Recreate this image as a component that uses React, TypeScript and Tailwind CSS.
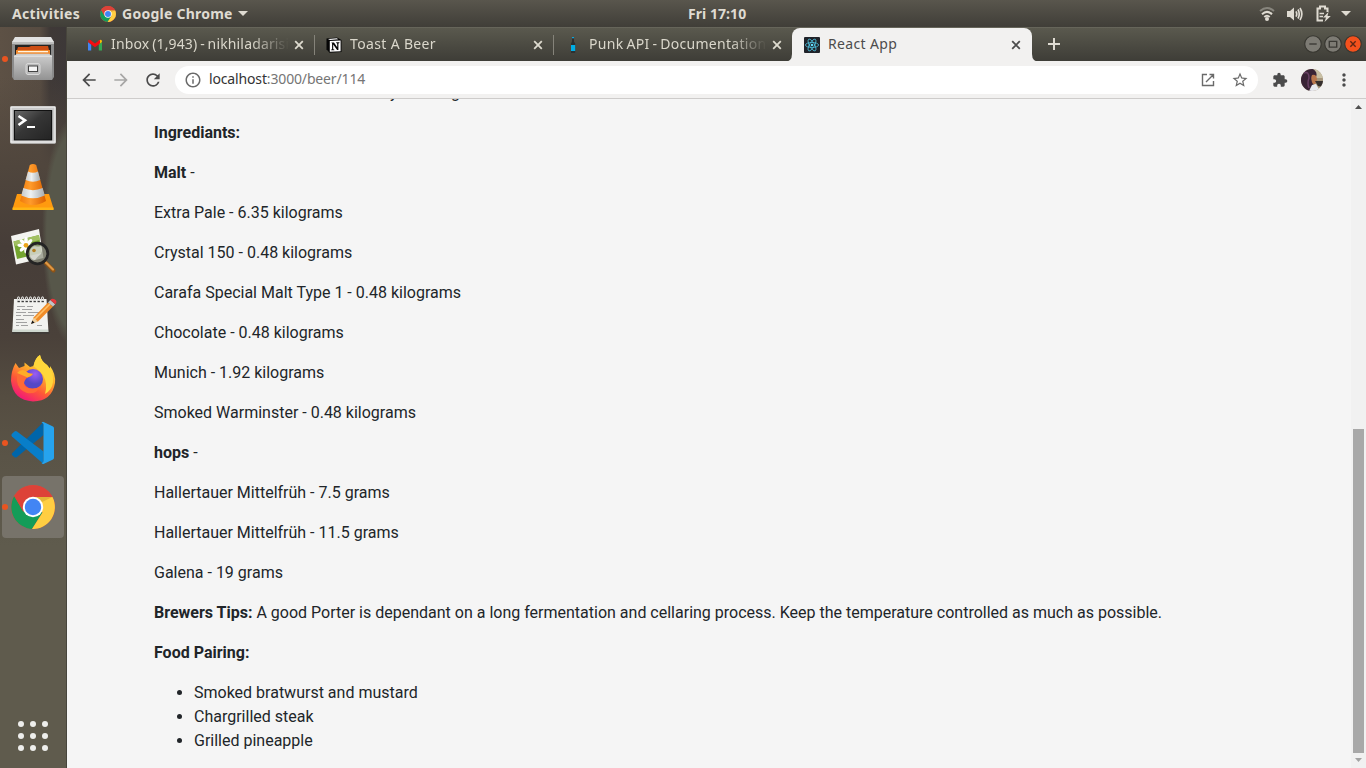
import React from "react";
import { MdArrowBack, MdArrowForward, MdRefresh, MdExtension, MdStarBorder, MdMoreVert, MdOutlineInfo } from "react-icons/md";

const ui = "font-['Noto_Sans',sans-serif] whitespace-nowrap";

function ChromeLogo({ className }: { className?: string }) {
  return (
    <svg className={className} viewBox="0 0 44 44">
      <circle cx="22" cy="22" r="22" fill="#dd4b3e" />
      <path d="M3.2 11 A22 22 0 0 0 21 44 L31.5 27.5 L22 22 L12 26 Z" fill="#149c58" />
      <path d="M41.5 12 A22 22 0 0 1 21 44 L31.5 27.5 L22 12 Z" fill="#ffce42" />
      <path d="M3.2 11 A22 22 0 0 1 41.5 12 H22 L12.5 27 Z" fill="#dd4238" />
      <path d="M22 12 H41.5 L31 17 Z" fill="#c99c2b" opacity=".5" />
      <circle cx="22" cy="22" r="10.2" fill="#fff" />
      <circle cx="22" cy="22" r="8.2" fill="#4285f4" />
    </svg>
  );
}

function Close({ color }: { color: string }) {
  return (
    <svg className="h-[10px] w-[10px] shrink-0" viewBox="0 0 10 10">
      <path d="M1.2 1.2 L8.8 8.8 M8.8 1.2 L1.2 8.8" stroke={color} strokeWidth="1.8" />
    </svg>
  );
}

function Gmail() {
  return (
    <svg className="h-4 w-4 shrink-0" viewBox="0 0 16 16">
      <path d="M1 5 V13.5 H4.2 V7.4 Z" fill="#4285f4" />
      <path d="M15 5 V13.5 H11.8 V7.4 Z" fill="#34a853" />
      <path d="M11.8 3.6 Q15 1.5 15 5 L11.8 7.6 Z" fill="#fbbc04" />
      <path d="M4.2 3.6 Q1 1.5 1 5 L4.2 7.6 Z" fill="#c5221f" />
      <path d="M3 2.8 L8 6.6 L13 2.8 L13 6.4 L8 10.3 L3 6.4 Z" fill="#f60c12" />
    </svg>
  );
}

function Notion() {
  return (
    <svg className="h-4 w-4 shrink-0" viewBox="0 0 16 16">
      <path d="M.5 1.5 L11 .5 L15.5 3 V15 L3.5 15.7 L.5 12.2 Z" fill="#050505" />
      <path d="M2 2 L10.8 1.3 L12.3 2.2 L4 2.9 Z" fill="#fff" />
      <path d="M3.8 4 L14.6 3.4 V14.2 L3.8 14.8 Z" fill="#fff" />
      <path d="M5.3 5.5 H8 L11.2 10.2 V6.4 L10.2 6 V5.3 H13.4 V6 L12.4 6.4 V13 H11.1 L7.2 7.5 V12.2 L8.3 12.5 V13.2 H5.2 V12.5 L6.1 12.2 V6.4 Z" fill="#050505" />
    </svg>
  );
}

function Bottle() {
  return (
    <svg className="h-4 w-4 shrink-0" viewBox="0 0 16 16">
      <path d="M7 0 H9 V4.8 L10.2 6.5 V16 H6 V6.5 L7 4.8 Z" fill="#2c3032" />
      <path d="M7 0 H9 V1.2 H7 Z" fill="#0ba6df" />
      <path d="M6 8 H10.2 V14 H6 Z" fill="#00aee6" />
    </svg>
  );
}

function ReactMark() {
  return (
    <svg className="h-4 w-4" viewBox="0 0 16 16">
      <rect width="16" height="16" rx="1" fill="#20232a" />
      <g fill="none" stroke="#4fc0dd" strokeWidth=".8">
        <ellipse cx="8" cy="8" rx="6.6" ry="2.5" />
        <ellipse cx="8" cy="8" rx="6.6" ry="2.5" transform="rotate(60 8 8)" />
        <ellipse cx="8" cy="8" rx="6.6" ry="2.5" transform="rotate(120 8 8)" />
      </g>
      <circle cx="8" cy="8" r="1.3" fill="#61dafb" />
    </svg>
  );
}

const tabs = [
  { icon: <Gmail />, title: "Inbox (1,943) - nikhiladarisi", cls: "tracking-[0.15px] [word-spacing:-1px]" },
  { icon: <Notion />, title: "Toast A Beer", cls: "tracking-[0.35px]" },
  { icon: <Bottle />, title: "Punk API - Documentation", cls: "tracking-[0.3px] [word-spacing:-1px]" },
];

function DockArt({ children }: { children: React.ReactNode }) {
  return <svg className="h-16 w-[67px]" viewBox="0 0 67 64">{children}</svg>;
}

const Files = (
  <DockArt>
    <defs>
      <linearGradient id="metal" x1="0" y1="0" x2="0" y2="1"><stop stopColor="#d0d0d0" /><stop offset="1" stopColor="#929292" /></linearGradient>
    </defs>
    <path d="M12 14 H54 V50 L52 53 H14 L12 50 Z" fill="#8b8b8b" />
    <path d="M15 10 H51 L54 15 H12 Z" fill="#e2e2e2" />
    <path d="M12 15 H54 V17 H12 Z" fill="#bdbdbd" />
    <path d="M15 18 H51 V29 H15 Z" fill="#232323" />
    <path d="M18 20 H29 L31 19 H48 L49 23 H17 Z" fill="#cc4d14" />
    <path d="M16 23 H50 V28 H16 Z" fill="#f08a30" />
    <path d="M18 24 H48 V25.3 H18 Z" fill="#fff3e0" />
    <path d="M14 29 L17 26.7 H49 L52 29 V53 H14 Z" fill="url(#metal)" />
    <path d="M14 28.6 H52 V30 H14 Z" fill="#dedede" />
    <rect x="26" y="36.5" width="14" height="11" rx="2" fill="#b9b9b9" stroke="#dadada" />
    <rect x="28.5" y="39" width="9" height="5.5" fill="#f5f5f5" stroke="#444" />
  </DockArt>
);

const Terminal = (
  <DockArt>
    <defs>
      <linearGradient id="screen" x1="0" y1="0" x2="1" y2="1"><stop stopColor="#686868" /><stop offset=".45" stopColor="#363636" /><stop offset="1" stopColor="#242424" /></linearGradient>
    </defs>
    <rect x="10.2" y="15.2" width="45.6" height="37.6" rx="1.5" fill="#c9c9c9" />
    <rect x="11" y="16" width="44" height="35" fill="none" stroke="#f5f5f5" />
    <rect x="13.8" y="19" width="38.4" height="30.4" fill="#111" />
    <rect x="15" y="20" width="36" height="28.5" fill="url(#screen)" />
    <path d="M18.5 25 L25 29.3 L18.5 34" fill="none" stroke="#fff" strokeWidth="2.6" />
    <path d="M27 36 H35" stroke="#fff" strokeWidth="2" />
  </DockArt>
);

const Vlc = (
  <DockArt>
    <defs>
      <linearGradient id="cone" x1="0" y1="0" x2="1" y2="0"><stop stopColor="#ef7b0c" /><stop offset=".4" stopColor="#ff9b2b" /><stop offset="1" stopColor="#d95f00" /></linearGradient>
      <linearGradient id="band" x1="0" y1="0" x2="1" y2="0"><stop stopColor="#c6cacc" /><stop offset=".4" stopColor="#eef1f2" /><stop offset="1" stopColor="#a6acaf" /></linearGradient>
    </defs>
    <path d="M17 39 H49 L53.5 53.5 Q54 55 52 55 H14 Q12 55 12.6 53.5 Z" fill="#ff9a0f" />
    <path d="M12.6 52.5 H53.5 V55 H12.6 Z" fill="#ffb616" />
    <path d="M29.8 10 Q33 7.8 36.2 10 L46 46 Q33 54 20 46 Z" fill="url(#cone)" />
    <path d="M28 16.5 Q33 19 38 16.5 L40.3 25 Q33 28.3 25.6 25 Z" fill="url(#band)" />
    <path d="M23.3 33 Q33 37.3 42.7 33 L44.8 40.5 Q33 46 21.3 40.5 Z" fill="url(#band)" />
  </DockArt>
);

const Viewer = (
  <DockArt>
    <path d="M11 17 L39 10 L43.5 39 L16 45.5 Z" fill="#f4f4f0" />
    <path d="M13.5 22.5 L39 16 L41.5 34 L17 40 Z" fill="#74a52f" />
    <path d="M13.5 22.5 L39 16 L39.7 21 L15 27 Z" fill="#a2c062" />
    <g fill="#fff">
      <ellipse cx="26" cy="21.5" rx="1.8" ry="3.6" /><ellipse cx="26" cy="31" rx="1.8" ry="3.6" />
      <ellipse cx="21" cy="26.3" rx="3.6" ry="1.8" /><ellipse cx="31" cy="26.3" rx="3.6" ry="1.8" />
      <ellipse cx="22.6" cy="23" rx="1.8" ry="3.6" transform="rotate(-45 22.6 23)" />
      <ellipse cx="29.4" cy="23" rx="1.8" ry="3.6" transform="rotate(45 29.4 23)" />
      <ellipse cx="22.6" cy="29.7" rx="1.8" ry="3.6" transform="rotate(45 22.6 29.7)" />
    </g>
    <circle cx="26" cy="26.3" r="2.4" fill="#eba51c" />
    <path d="M46 44 L53.5 51.5" stroke="#8f5416" strokeWidth="4" strokeLinecap="round" />
    <path d="M46 43.5 L53 50.5" stroke="#df9844" strokeWidth="2.2" strokeLinecap="round" />
    <circle cx="37.5" cy="34.5" r="10.3" fill="#8f9382" fillOpacity=".75" stroke="#242424" strokeWidth="2.8" />
    <path d="M30 34 Q29 29 35 27 Q38 29 41 27 Q43 31 41 35 Q37 38 35 41 Q32 41 30 37" fill="#f3f3ed" opacity=".6" />
    <path d="M32 30 Q36 27 41 28" stroke="#c7cabf" fill="none" />
    <circle cx="34" cy="31.5" r="1.8" fill="#b57e20" />
  </DockArt>
);

const Gedit = (
  <DockArt>
    <rect x="12" y="46" width="37.5" height="5" fill="#3c3b37" opacity=".7" />
    <path d="M14 16 H46.5 L48.5 49 H12.3 Z" fill="#f2f2ef" />
    <path d="M12.6 46.5 H48 V49 H12.4 Z" fill="#cfd8cf" />
    {[17.5, 21.5, 25.5, 29.5, 33.5, 37.5, 41.5].map((x) => (
      <g key={x} fill="none">
        <path d={`M${x} 18.5 H${x + 2.4}`} stroke="#3a3a3a" strokeWidth="1.4" />
        <path d={`M${x} 18 V15 Q${x + 1} 12.5 ${x + 2} 15 V17.5`} stroke="#d8d8d6" strokeWidth="1.1" />
      </g>
    ))}
    <g stroke="#a1a1a1" strokeWidth="1">
      <path d="M17 23.5 H25 M27 23.5 H33 M17 26.5 H20 M22 26.5 H32 M16 29.5 H26 M28 29.5 H39 M16 32.5 H21 M23 32.5 H34 M16 36.5 H24 M16 39.5 H27 M16 42.5 H19 M21 42.5 H28 M37 42.5 H42" />
    </g>
    <path d="M31.5 40.5 L33.5 34.5 L48 19.5 L53 23.5 L38 38.5 Z" fill="#ef8b28" />
    <path d="M35 36 L50 21" stroke="#ffc067" strokeWidth="1.6" />
    <path d="M31.5 40.5 L33.7 34.5 L37.8 38.4 Z" fill="#ecd0a0" />
    <path d="M31 41 L32.3 37.5 L34.6 39.7 Z" fill="#151515" />
    <path d="M48 19.5 L50.3 17 L55.2 21.2 L53 23.5 Z" fill="#bfc4c8" />
    <path d="M50.3 17 Q52 15 54.5 16.3 Q58 18 55.3 21.2 Z" fill="#e6383d" />
  </DockArt>
);

const Firefox = (
  <DockArt>
    <defs>
      <linearGradient id="fx" x1=".8" y1=".05" x2=".25" y2="1"><stop stopColor="#fff04a" /><stop offset=".35" stopColor="#ffb02b" /><stop offset=".65" stopColor="#ff5a36" /><stop offset="1" stopColor="#f0107f" /></linearGradient>
      <radialGradient id="globe" cx=".6" cy=".25"><stop stopColor="#9b5cf5" /><stop offset="1" stopColor="#5548c6" /></radialGradient>
    </defs>
    <path d="M15.5 16 L19 21 L24.5 19 V15.5 L30 20 L33.5 19 Q35 11 40 8 Q41 14 47 18 L50 22 V19 Q56 27 55 36 Q52 54 33 54.5 Q13 53 11 34 Q11 24 15.5 16 Z" fill="url(#fx)" />
    <path d="M33.5 19 Q35 11 40 8 Q41 14 47 18 Q54 25 53 35 Q52 43 45 47 Q48 37 43 28 Q39 23 33.5 19 Z" fill="#ffd73b" />
    <circle cx="33" cy="32" r="10" fill="url(#globe)" />
    <path d="M17 26 Q20 23 25 23.5 Q28 27 33 27 Q31 30 27.5 30.5 Q24 33 24 37 Q25 41 31 41.5 Q36 42 41 39 Q36 48 27 46 Q18 43 17 34 Z" fill="#ff6a35" />
    <path d="M17 26 Q20 22 25.5 23.5 Q28 27 33 26.8 Q31 30 27.5 30.5 Q22 28 17 26" fill="#ffac28" />
  </DockArt>
);

const VsCode = (
  <DockArt>
    <path d="M11.8 42.5 L43.5 11 V24 L17 46 Q15.5 47 14.3 46 L12 44 Z" fill="#0065a9" />
    <path d="M11.8 23 L14.5 20.5 Q15.8 19.6 17 20.5 L43.5 40.5 V53 L12 25.5 Q10.8 24.2 11.8 23 Z" fill="#087ec9" />
    <path d="M43 10.8 L53 15.5 Q54 16 54 17.3 V46.8 Q54 48 53 48.5 L43.5 53 Q42.5 53.3 41.5 52 Q43.5 52 43.5 50 V13.5 Q43.5 12 41.5 11.7 Z" fill="#26a3ee" />
  </DockArt>
);

const Chrome = (
  <div className="flex h-16 items-center pl-[2px]">
    <div className="flex h-[62px] w-[62px] items-center justify-center rounded-[4px] bg-[#77736a]"><ChromeLogo className="h-11 w-11" /></div>
  </div>
);

const dock = [
  { art: Files, on: true }, { art: Terminal, on: false }, { art: Vlc, on: false }, { art: Viewer, on: false },
  { art: Gedit, on: false }, { art: Firefox, on: false }, { art: VsCode, on: true }, { art: Chrome, on: true },
];

const malt = ["Extra Pale - 6.35 kilograms", "Crystal 150 - 0.48 kilograms", "Carafa Special Malt Type 1 - 0.48 kilograms", "Chocolate - 0.48 kilograms", "Munich - 1.92 kilograms", "Smoked Warminster - 0.48 kilograms"];
const hops = ["Hallertauer Mittelfrüh - 7.5 grams", "Hallertauer Mittelfrüh - 11.5 grams", "Galena - 19 grams"];

function TopBar() {
  return (
    <header className={`${ui} flex h-[27px] shrink-0 items-center bg-linear-to-b from-[#59564d] to-[#403e38] text-[14px] font-bold text-[#dfdbd2]`}>
      <div className="flex w-[688px] items-center pl-3">
        <span className="w-[88px] tracking-[0.3px]">Activities</span>
        <ChromeLogo className="h-4 w-4" />
        <span className="ml-[6px] w-[116px] tracking-[0.25px]">Google Chrome</span>
        <svg className="h-[5px] w-[10px]" viewBox="0 0 10 5"><path d="M0 0 H10 L5 5 Z" fill="#dfdbd2" /></svg>
      </div>
      <span className="-mt-px tracking-[0.05px]">Fri 17:10</span>
      <div className="ml-auto flex items-center pr-[15px]">
        <svg className="mr-[12px] h-4 w-4" viewBox="0 0 16 16" fill="none" strokeWidth="2">
          <path d="M1 5 Q8 -1 15 5" stroke="#87857d" /><path d="M3 8.3 Q8 3.5 13 8.3" stroke="#dfdbd2" /><path d="M5.3 11 Q8 8.5 10.7 11" stroke="#dfdbd2" /><circle cx="8" cy="13" r="2" fill="#dfdbd2" />
        </svg>
        <svg className="mr-[13px] h-4 w-4" viewBox="0 0 16 16" fill="none" stroke="#dfdbd2" strokeWidth="1.7">
          <path d="M0 5 H3 L7 1.5 V14.5 L3 11 H0 Z" fill="#dfdbd2" stroke="none" /><path d="M9 5.3 Q10.5 8 9 10.7 M11 3.5 Q13.5 8 11 12.5 M13 2 Q16.7 8 13 14" />
        </svg>
        <svg className="mr-[10px] h-[17px] w-[15px]" viewBox="0 0 15 17">
          <path d="M7 15.5 H1.5 V3.5 H4 V1.5 H9 V3.5 H11.5 V7" fill="none" stroke="#dfdbd2" strokeWidth="2" />
          <path d="M3.5 8.5 H8 M3.5 11.5 H7" stroke="#dfdbd2" strokeWidth="1.5" />
          <path d="M12.5 7 L7 12.4 H10 L8.5 17 L14.8 11 H11.5 Z" fill="#dfdbd2" />
        </svg>
        <svg className="h-[5px] w-[10px]" viewBox="0 0 10 5"><path d="M0 0 H10 L5 5 Z" fill="#dfdbd2" /></svg>
      </div>
    </header>
  );
}

function TabStrip() {
  return (
    <div className="flex h-[34px] shrink-0 items-center border-t border-[#66655a] bg-linear-to-b from-[#5a594e] to-[#3e3d37] pl-2">
      {tabs.map((t, i) => (
        <div key={t.title} className="flex h-5 w-[239px] shrink-0 items-center pl-3">
          {t.icon}
          <span className={`${ui} ml-2 w-[178px] shrink-0 overflow-hidden pb-[2px] mask-[linear-gradient(to_right,black_140px,transparent_178px)] text-[14px] text-[#dad7cb] ${t.cls}`}>{t.title}</span>
          <span className="ml-[5px] flex shrink-0"><Close color="#dedbcf" /></span>
          {i < 2 && <span className="ml-[10px] h-5 w-px shrink-0 bg-[#85837a]" />}
        </div>
      ))}
      <div className="relative flex h-[34px] w-[240px] items-center self-start rounded-t-[8px] bg-[#f2f1f0] pl-3">
        <svg className="absolute bottom-0 -left-2 h-2 w-2" viewBox="0 0 8 8"><path d="M8 0 V8 H0 Q8 8 8 0" fill="#f2f1f0" /></svg>
        <svg className="absolute -right-2 bottom-0 h-2 w-2" viewBox="0 0 8 8"><path d="M0 0 V8 H8 Q0 8 0 0" fill="#f2f1f0" /></svg>
        <ReactMark />
        <span className={`${ui} ml-2 w-[178px] pb-[3px] text-[14px] tracking-[0.35px] text-[#4c4c4c]`}>React App</span>
        <span className="ml-[5px] flex"><Close color="#4c4c4c" /></span>
      </div>
      <svg className="-mt-px ml-4 h-3 w-3" viewBox="0 0 12 12"><path d="M6 0 V12 M0 6 H12" stroke="#dfdbd2" strokeWidth="2" /></svg>
      <div className="-mt-px ml-auto flex gap-[2px] pr-1">
        {["M5 8.5 H12", "M5 6 H12 V11.5 H5 Z", "M6 6 L11 11 M11 6 L6 11"].map((d, i) => (
          <svg key={d} className="h-[18px] w-[18px]" viewBox="0 0 17 17">
            <circle cx="8.5" cy="8.5" r="7.8" fill={i === 2 ? "#f4511d" : "#7d7b74"} stroke="#36352f" strokeWidth="1" />
            <path d={d} fill="none" stroke={i === 2 ? "#5e2614" : "#3b3a35"} strokeWidth="1.3" />
          </svg>
        ))}
      </div>
    </div>
  );
}

function Toolbar() {
  return (
    <div className="flex h-[38px] shrink-0 items-center border-b border-[#cecccb] bg-[#f2f1f0] pl-3 text-[#4b4b4b]">
      <MdArrowBack className="h-5 w-5" />
      <MdArrowForward className="ml-3 h-5 w-5 text-[#a7a6a5]" />
      <MdRefresh className="ml-3 h-5 w-5" />
      <div className="ml-3 flex h-7 w-[1083px] items-center rounded-full bg-white pl-[9px] text-[#6a6a6a]">
        <MdOutlineInfo className="h-[18px] w-[18px]" />
        <span className={`${ui} ml-[7px] pb-[2px] text-[14px] tracking-[-0.15px] text-[#757575]`}><span className="text-[#333]">localhost</span>:3000/beer/114</span>
        <svg className="mr-4 ml-auto h-[14px] w-[14px]" viewBox="0 0 14 14" fill="none" stroke="#6a6a6a" strokeWidth="1.4"><path d="M6 1.5 H1.5 V12.5 H12.5 V8 M8.5 1.5 H12.5 V5.5 M12.5 1.5 L5 9" /></svg>
        <MdStarBorder className="mr-[9px] h-[18px] w-[18px]" />
      </div>
      <MdExtension className="ml-[14px] h-4 w-4" />
      <svg className="ml-[13px] h-[22px] w-[22px]" viewBox="0 0 22 22">
        <defs><clipPath id="face"><circle cx="11" cy="11" r="11" /></clipPath></defs>
        <g clipPath="url(#face)">
          <rect width="22" height="22" fill="#a5957b" />
          <path d="M13 0 H22 V9 H15 Z" fill="#c9c0a5" />
          <path d="M0 0 H12 Q17 3 15 8 L13 14 L11 22 H0 Z" fill="#3a2436" />
          <path d="M11 6 Q16 5 16 11 Q15 16 12 15 Q9 10 11 6" fill="#b9764d" />
          <path d="M8 22 L11 16 L15 15 L19 22 Z" fill="#e9eaf0" />
          <path d="M14 12 H22 V18 L17 17 Z" fill="#36302e" />
          <path d="M3 4 Q8 2 8 9 Q6 14 8 19" stroke="#694064" fill="none" strokeWidth="1.5" />
        </g>
      </svg>
      <MdMoreVert className="ml-[11px] h-5 w-5" />
    </div>
  );
}

function Page() {
  return (
    <div className="flex min-h-0 flex-1 bg-[#f5f5f5]">
      <main className="flex min-w-0 flex-1 flex-col justify-end overflow-hidden pb-[15px] pl-[87px] font-[Roboto,sans-serif] text-base leading-6 text-[#212529] [&>p]:mb-4 [&>p]:shrink-0">
        <p className="flex pl-[236px]"><span className="w-[61px]">y</span><span>g</span></p>
        <p><b>Ingrediants:</b></p>
        <p><b>Malt</b> -</p>
        {malt.map((m) => <p key={m}>{m}</p>)}
        <p><b>hops</b> -</p>
        {hops.map((h) => <p key={h}>{h}</p>)}
        <p><b>Brewers Tips:</b> A good Porter is dependant on a long fermentation and cellaring process. Keep the temperature controlled as much as possible.</p>
        <p><b>Food Pairing:</b></p>
        <ul className="shrink-0 list-disc pl-10">
          <li>Smoked bratwurst and mustard</li>
          <li>Chargrilled steak</li>
          <li>Grilled pineapple</li>
        </ul>
      </main>
      <div className="flex w-[15px] shrink-0 flex-col items-center bg-[#f1f1f1]">
        <svg className="mt-[6px] h-1 w-[7px]" viewBox="0 0 7 4"><path d="M0 4 H7 L3.5 0 Z" fill="#505050" /></svg>
        <div className="mt-[320px] h-[324px] w-[11px] bg-[#a8a8a8]" />
        <svg className="mt-[5px] h-1 w-[7px]" viewBox="0 0 7 4"><path d="M0 0 H7 L3.5 4 Z" fill="#a3a3a3" /></svg>
      </div>
    </div>
  );
}

export default function App() {
  return (
    <div className="flex h-[768px] w-[1366px] flex-col overflow-hidden bg-[#3c3b37]">
      <TopBar />
      <div className="flex min-h-0 flex-1">
        <nav className="flex w-[67px] shrink-0 flex-col border-r border-[#47453c] bg-[radial-gradient(ellipse_32px_115px_at_74px_205px,#57574a_0,#57574a_85%,transparent_100%),linear-gradient(to_bottom,transparent_0,transparent_50px,#50463d_140px,#463d38_220px,#4a413a_310px,#554d41_370px,#5a5447_430px,#5f5b4d_520px,#5f5b4d_100%),linear-gradient(to_right,#5d5145_0,#574c42_40px,#3f3937_50px,#3d3838_100%)]">
          {dock.map((d, i) => (
            <div key={i} className="relative h-16 w-[67px] shrink-0">
              {d.art}
              {d.on && <span className="absolute top-[29px] left-[2px] h-[6px] w-[6px] rounded-full bg-[#e95420]" />}
            </div>
          ))}
          <div className="mt-auto grid h-16 grid-cols-[repeat(3,6px)] grid-rows-[repeat(3,6px)] place-content-center gap-[6px]">
            {Array.from({ length: 9 }, (_, i) => <span key={i} className="rounded-full bg-[#eeeeec]" />)}
          </div>
        </nav>
        <div className="flex min-w-0 flex-1 flex-col">
          <TabStrip />
          <Toolbar />
          <Page />
        </div>
      </div>
    </div>
  );
}
